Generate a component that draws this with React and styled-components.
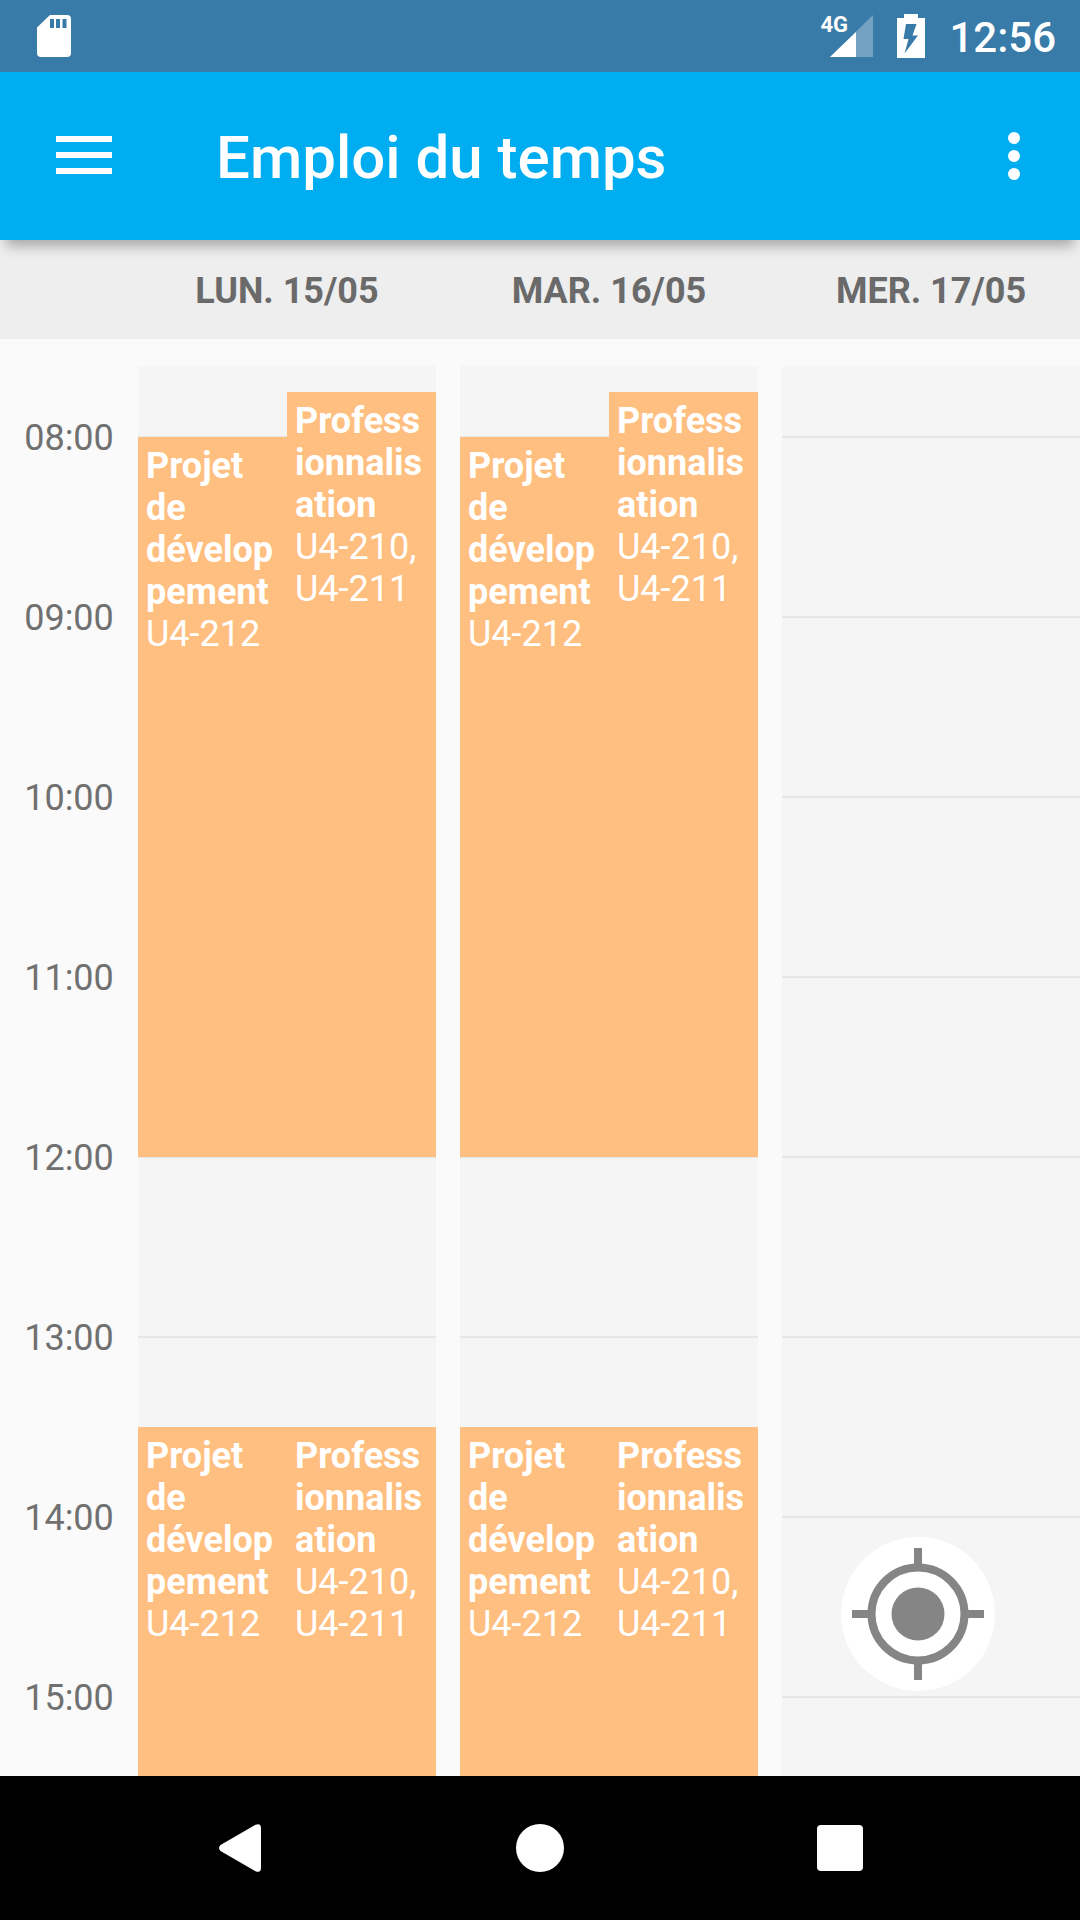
import React from "react";
import styled, { createGlobalStyle } from "styled-components";

const QUARTER = 45;
const HOUR = 180;

const GlobalStyle = createGlobalStyle`
  *, *::before, *::after { box-sizing: border-box; }
  body {
    margin: 0;
    background: #fafafa;
    font-family: Roboto, "Noto Sans", sans-serif;
  }
  h1, h2, h3, p, ol, ul { margin: 0; padding: 0; }
  button {
    border: 0;
    padding: 0;
    background: none;
    color: inherit;
    font: inherit;
    cursor: pointer;
  }
  svg { display: block; }
`;

const Screen = styled.div`
  display: flex;
  flex-direction: column;
  height: 100vh;
`;

const StatusBar = styled.div`
  display: flex;
  align-items: center;
  justify-content: space-between;
  flex: none;
  height: 72px;
  padding: 0 24px 0 37px;
  background: #387aa8;
  color: #fff;
`;

const StatusGroup = styled.div`
  display: flex;
  align-items: center;
  gap: 24px;
`;

const Signal = styled.div`
  position: relative;
  padding-left: 10px;
`;

const NetworkType = styled.span`
  position: absolute;
  top: -2px;
  left: 0;
  font-size: 22px;
  font-weight: 700;
  line-height: 24px;
`;

const Clock = styled.time`
  padding-top: 4px;
  font-size: 42px;
  font-weight: 500;
  line-height: 48px;
`;

const AppBar = styled.header`
  position: relative;
  z-index: 1;
  display: flex;
  align-items: center;
  flex: none;
  height: 168px;
  padding-top: 4px;
  background: #00adf0;
  color: #fff;
  box-shadow: 0 12px 12px -6px rgba(0, 0, 0, 0.3);
`;

const BarButton = styled.button`
  display: flex;
  align-items: center;
  justify-content: center;
  width: ${(p) => p.$width}px;
  height: 144px;
`;

const Title = styled.h1`
  flex: 1;
  padding-left: 48px;
  font-size: 60px;
  font-weight: 500;
  line-height: 72px;
`;

const DayHeader = styled.div`
  display: grid;
  grid-template-columns: repeat(3, 1fr);
  gap: 24px;
  flex: none;
  height: 99px;
  padding: 30px 0 0 138px;
  background: #eee;
`;

const DayName = styled.h2`
  color: #6a6a6a;
  font-size: 36px;
  font-weight: 700;
  line-height: 42px;
  text-align: center;
  text-transform: uppercase;
`;

const Timetable = styled.main`
  position: relative;
  display: grid;
  grid-template-columns: 138px 1fr;
  flex: 1;
  min-height: 0;
  overflow: hidden;
`;

const Hours = styled.ol`
  display: flex;
  flex-direction: column;
  gap: ${HOUR - 42}px;
  padding-top: 78px;
  list-style: none;
`;

const Hour = styled.li`
  color: #707070;
  font-size: 36px;
  line-height: 42px;
  text-align: center;
`;

const Days = styled.div`
  display: grid;
  grid-template-columns: repeat(3, 1fr);
  gap: 24px;
  padding-top: 27px;
`;

const Day = styled.section`
  display: grid;
  grid-template-columns: repeat(2, 1fr);
  grid-template-rows: 26px repeat(30, ${QUARTER}px) 1fr;
  background: linear-gradient(#e6e6e6 2px, transparent 2px) 0 70px / 100% ${HOUR}px #f5f5f5;
`;

const EventCard = styled.article`
  grid-column: ${(p) => p.$lane};
  grid-row: ${(p) => p.$from} / ${(p) => p.$to};
  min-width: 0;
  padding: 8px;
  background: #ffbf80;
  color: #fff;
  font-size: 36px;
  line-height: 42px;
  overflow-wrap: anywhere;
`;

const Course = styled.h3`
  font-size: 36px;
  font-weight: 700;
`;

const TodayButton = styled.button`
  position: absolute;
  right: 85px;
  bottom: 85px;
  border-radius: 50%;
  background: #fff;
`;

const NavBar = styled.nav`
  display: flex;
  flex: none;
  height: 144px;
  padding: 0 90px;
  background: #000;
`;

const NavButton = styled.button`
  display: flex;
  align-items: center;
  justify-content: center;
  flex: 1;
`;

const hours = ["08:00", "09:00", "10:00", "11:00", "12:00", "13:00", "14:00", "15:00"];

/* Row 2 is 07:45; every following row is a quarter of an hour. */
const classes = [
  { course: "Projet de développement", rooms: "U4-212", lane: 1, from: 3, to: 19 },
  { course: "Professionnalisation", rooms: "U4-210, U4-211", lane: 2, from: 2, to: 19 },
  { course: "Projet de développement", rooms: "U4-212", lane: 1, from: 25, to: -1 },
  { course: "Professionnalisation", rooms: "U4-210, U4-211", lane: 2, from: 25, to: -1 },
];

const days = [
  { name: "Lun. 15/05", events: classes },
  { name: "Mar. 16/05", events: classes },
  { name: "Mer. 17/05", events: [] },
];

const SdCardIcon = () => (
  <svg width="34" height="42" viewBox="0 0 34 42" aria-hidden="true">
    <path
      fill="#fff"
      fillRule="evenodd"
      d="M13 0H30a4 4 0 0 1 4 4V38a4 4 0 0 1-4 4H4a4 4 0 0 1-4-4V12.500ZM13 4v9h4V4ZM19 4v9h4V4ZM25.500 4v9h4V4Z"
    />
  </svg>
);

const SignalIcon = () => (
  <svg width="43" height="42" viewBox="0 0 43 42" aria-hidden="true">
    <path fill="#fff" fillOpacity="0.3" d="M0 42 43 0V42Z" />
    <path fill="#fff" d="M0 42 26 17V42Z" />
  </svg>
);

const BatteryIcon = () => (
  <svg width="28" height="44" viewBox="0 0 28 44" aria-hidden="true">
    <path
      fill="#fff"
      fillRule="evenodd"
      d="M7 0H21V4H28V44H0V4H7ZM9 10 6.500 25H11.500L7.500 39.500 21 21.500H15.500L19.500 10Z"
    />
  </svg>
);

const MenuIcon = () => (
  <svg width="72" height="72" viewBox="0 0 72 72" fill="#fff" aria-hidden="true">
    <path d="M8 14H64v6H8ZM8 30H64v6H8ZM8 46H64v6H8Z" />
  </svg>
);

const MoreIcon = () => (
  <svg width="72" height="72" viewBox="0 0 72 72" fill="#fff" aria-hidden="true">
    <circle cx="36" cy="16" r="6" />
    <circle cx="36" cy="34" r="6" />
    <circle cx="36" cy="52" r="6" />
  </svg>
);

const TargetIcon = () => (
  <svg width="154" height="154" viewBox="0 0 154 154" fill="none" stroke="#858585" strokeWidth="8" aria-hidden="true">
    <circle cx="77" cy="77" r="46.500" />
    <path d="M77 11V30M77 124V143M11 77H30M124 77H143" />
    <circle cx="77" cy="77" r="26.500" fill="#858585" stroke="none" />
  </svg>
);

const BackIcon = () => (
  <svg width="42" height="48" viewBox="0 0 42 48" aria-hidden="true">
    <path fill="#fff" d="M1.500 21 36.500 0.800Q42-1.500 42 4.500V43.500Q42 49.500 36.500 47.200L1.500 27Q-1.500 24 1.500 21Z" />
  </svg>
);

const HomeIcon = () => (
  <svg width="48" height="48" viewBox="0 0 48 48" aria-hidden="true">
    <circle cx="24" cy="24" r="24" fill="#fff" />
  </svg>
);

const RecentsIcon = () => (
  <svg width="46" height="46" viewBox="0 0 46 46" aria-hidden="true">
    <rect width="46" height="46" rx="4" fill="#fff" />
  </svg>
);

export default function App() {
  return (
    <Screen>
      <GlobalStyle />
      <StatusBar>
        <SdCardIcon />
        <StatusGroup>
          <Signal>
            <SignalIcon />
            <NetworkType>4G</NetworkType>
          </Signal>
          <BatteryIcon />
          <Clock>12:56</Clock>
        </StatusGroup>
      </StatusBar>
      <AppBar>
        <BarButton $width={168} aria-label="Menu">
          <MenuIcon />
        </BarButton>
        <Title>Emploi du temps</Title>
        <BarButton $width={132} aria-label="Plus d'options">
          <MoreIcon />
        </BarButton>
      </AppBar>
      <DayHeader>
        {days.map((day) => (
          <DayName key={day.name}>{day.name}</DayName>
        ))}
      </DayHeader>
      <Timetable>
        <Hours>
          {hours.map((hour) => (
            <Hour key={hour}>{hour}</Hour>
          ))}
        </Hours>
        <Days>
          {days.map((day) => (
            <Day key={day.name} aria-label={day.name}>
              {day.events.map((e) => (
                <EventCard key={`${e.lane}-${e.from}`} $lane={e.lane} $from={e.from} $to={e.to}>
                  <Course>{e.course}</Course>
                  <p>{e.rooms}</p>
                </EventCard>
              ))}
            </Day>
          ))}
        </Days>
        <TodayButton aria-label="Aujourd'hui">
          <TargetIcon />
        </TodayButton>
      </Timetable>
      <NavBar>
        <NavButton aria-label="Retour">
          <BackIcon />
        </NavButton>
        <NavButton aria-label="Accueil">
          <HomeIcon />
        </NavButton>
        <NavButton aria-label="Applications récentes">
          <RecentsIcon />
        </NavButton>
      </NavBar>
    </Screen>
  );
}
